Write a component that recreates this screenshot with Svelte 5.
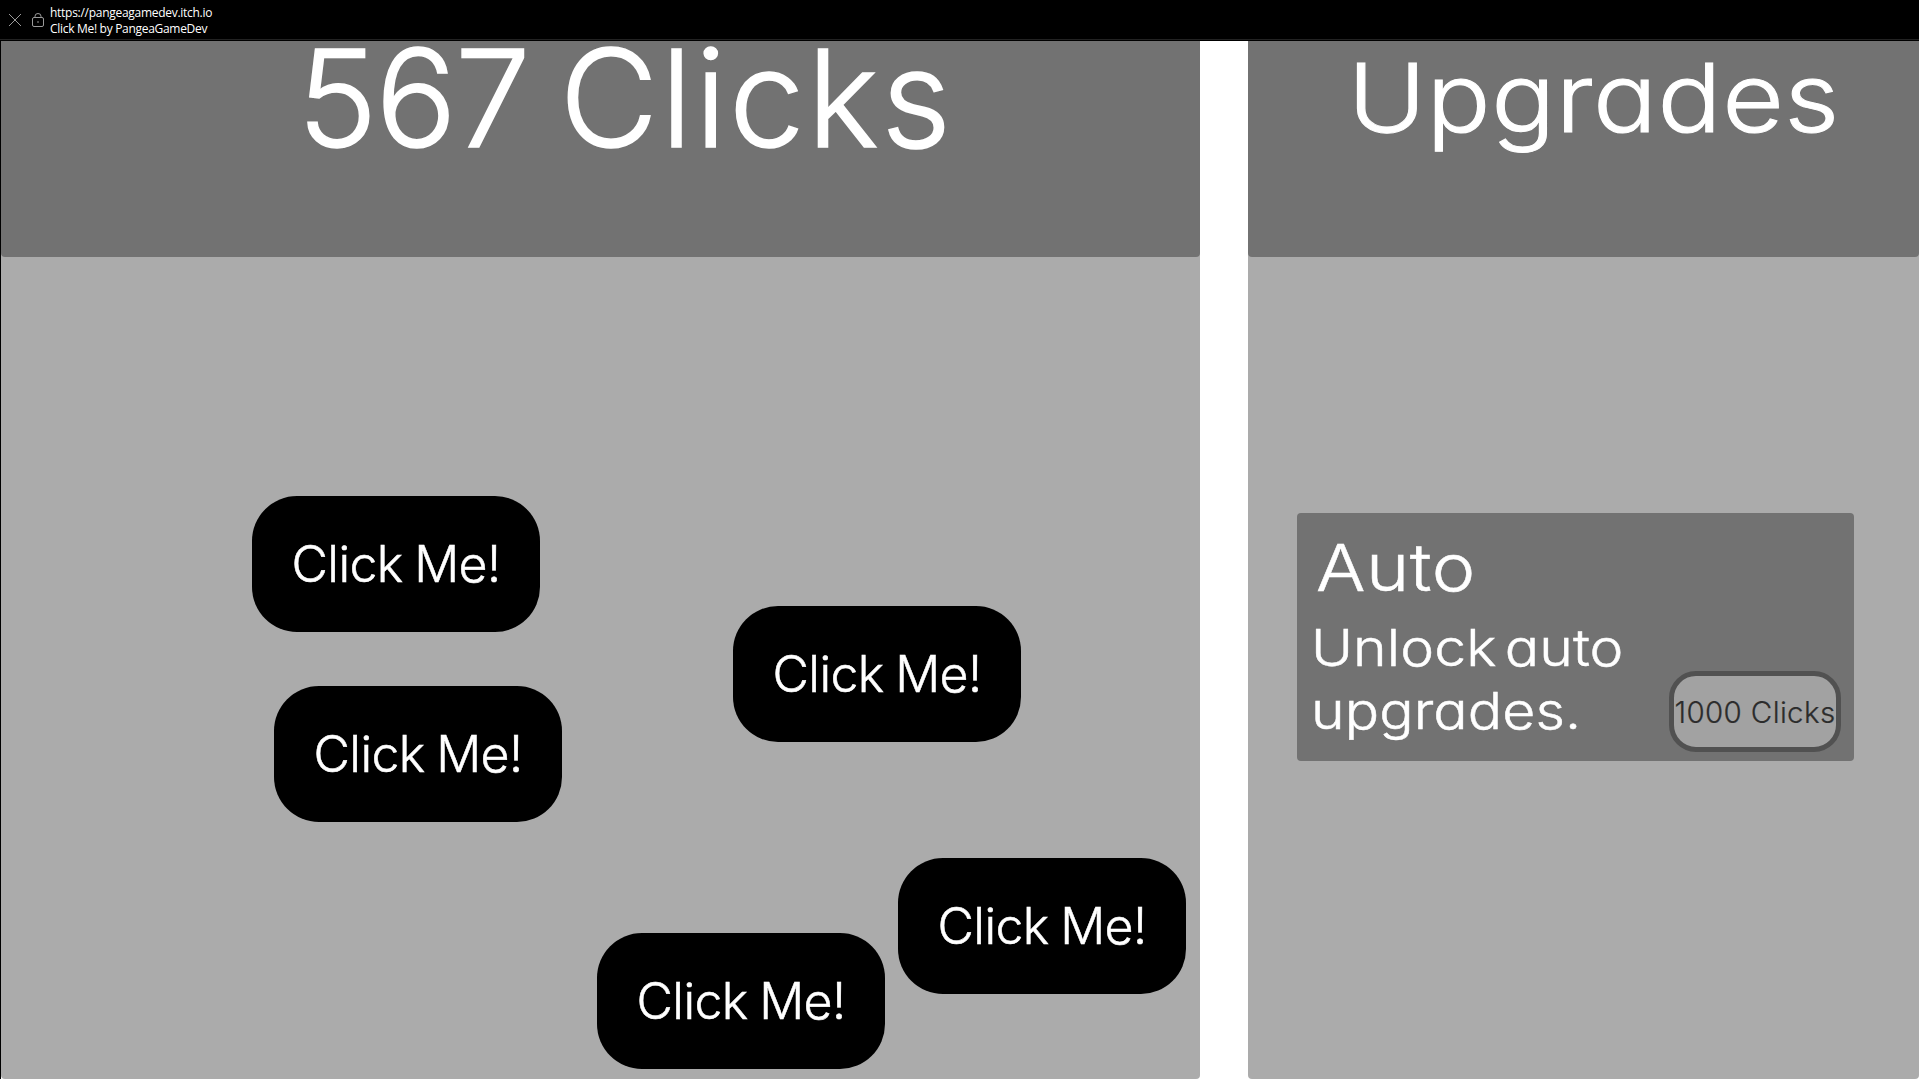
<script lang="ts">
	interface Target {
		x: number;
		y: number;
	}

	interface Upgrade {
		name: string;
		description: string;
		cost: number;
	}

	const page = {
		url: 'https://pangeagamedev.itch.io',
		title: 'Click Me! by PangeaGameDev'
	};

	// positions inside the play field
	const targets: Target[] = [
		{ x: 251, y: 455 },
		{ x: 732, y: 565 },
		{ x: 273, y: 645 },
		{ x: 897, y: 817 },
		{ x: 596, y: 892 }
	];

	let clicks = $state(567);
	let upgrades: Upgrade[] = $state([
		{ name: 'Auto', description: 'Unlock auto upgrades.', cost: 1000 }
	]);

	const buy = (upgrade: Upgrade) => {
		if (clicks < upgrade.cost) return;
		clicks -= upgrade.cost;
		upgrades = upgrades.filter((u) => u.name !== upgrade.name);
	};
</script>

<div class="window">
	<header class="titlebar">
		<svg class="close" viewBox="0 0 14 14" width="14" height="14">
			<path d="M1 1l12 12M13 1L1 13" />
		</svg>
		<svg class="lock" viewBox="0 0 12 14" width="12" height="14">
			<rect x="0.5" y="4.5" width="11" height="9" rx="1.5" />
			<path d="M3 4.5V3.2a3 2.7 0 0 1 6 0v1.3" />
			<rect class="dot" x="5.3" y="8.3" width="1.4" height="1.4" />
		</svg>
		<div class="page">
			<span class="url">{page.url}</span>
			<span class="name">{page.title}</span>
		</div>
	</header>

	<main class="game">
		<section class="panel field">
			<div class="panel-header">
				<h1 class="score"><span class="count">{clicks}</span> <span class="unit">Clicks</span></h1>
			</div>
			{#each targets as target}
				<button
					class="target"
					style="left: {target.x}px; top: {target.y}px"
					onclick={() => clicks++}>Click Me!</button
				>
			{/each}
		</section>

		<section class="panel shop">
			<div class="panel-header">
				<h2 class="shop-title">Upgrades</h2>
			</div>
			{#each upgrades as upgrade (upgrade.name)}
				<article class="card">
					<div class="info">
						<h3>{upgrade.name}</h3>
						<p>{upgrade.description}</p>
					</div>
					<button class="buy" disabled={clicks < upgrade.cost} onclick={() => buy(upgrade)}
						>{upgrade.cost} Clicks</button
					>
				</article>
			{/each}
		</section>
	</main>
</div>

<style>
	:global(body) {
		background: #000;
		overflow: hidden;
	}
	.window,
	.window :where(*) {
		box-sizing: border-box;
		margin: 0;
	}
	.window {
		display: flex;
		flex-direction: column;
		width: 100vw;
		height: 100vh;
		overflow: hidden;
	}

	.titlebar {
		display: flex;
		flex: none;
		align-items: center;
		height: 41px;
		padding-left: 8px;
		background: #000;
		border-bottom: 1px solid #000;
		box-shadow: inset 0 -1px #222;
	}
	.titlebar svg {
		flex: none;
		fill: none;
		stroke: #9a9a9a;
		stroke-width: 1;
	}
	.titlebar .dot {
		fill: #9a9a9a;
		stroke: none;
	}
	.lock {
		margin-left: 10px;
	}
	.page {
		display: flex;
		flex-direction: column;
		margin-left: 6px;
		padding-top: 2px;
		color: #fff;
		font: 12px/16px 'Open Sans', sans-serif;
		white-space: nowrap;
	}
	.url {
		letter-spacing: -0.28px;
	}
	.name {
		letter-spacing: -0.3px;
	}

	.game {
		display: flex;
		flex: 1;
		gap: 48px;
		padding-left: 1px;
		background: linear-gradient(90deg, #000 1px, #fff 1px);
		font-family: Inter, sans-serif;
		font-feature-settings: 'cv11';
		color: #fff;
	}
	.panel {
		position: relative;
		background: #ababab;
		border-radius: 0 0 4px 4px;
	}
	.panel-header {
		display: flex;
		justify-content: center;
		height: 216px;
		background: #727272;
		border-radius: 0 0 4px 4px;
	}
	.field {
		width: 1199px;
		flex: none;
	}
	.shop {
		flex: 1;
	}
	h1,
	h2,
	h3 {
		font-weight: 300;
		line-height: 1;
		white-space: nowrap;
	}
	.score {
		margin-top: -10px;
		padding-left: 50px;
		font-size: 135px;
		word-spacing: -7px;
		-webkit-text-stroke: 1.5px;
	}
	.count {
		letter-spacing: -1.8px;
	}
	.unit {
		letter-spacing: 2.7px;
	}
	.shop-title {
		margin-top: 9px;
		padding-left: 18px;
		font-size: 95px;
		letter-spacing: 0.5px;
		transform: scaleX(1.12);
		-webkit-text-stroke: 1px;
	}

	button {
		padding: 0;
		border: 0;
		font: inherit;
		font-feature-settings: inherit;
		white-space: nowrap;
		cursor: pointer;
	}
	.target {
		position: absolute;
		width: 288px;
		height: 136px;
		border-radius: 45px;
		background: #000;
		color: #fff;
		font-size: 50px;
		font-weight: 300;
		letter-spacing: -0.6px;
		word-spacing: -2px;
		-webkit-text-stroke: 0.5px;
	}

	.card {
		display: flex;
		justify-content: space-between;
		align-items: flex-end;
		width: 557px;
		height: 248px;
		margin: 256px 0 0 49px;
		padding: 0 13px 9px 15px;
		background: #727272;
		border-radius: 4px;
	}
	.info {
		align-self: flex-start;
		width: 350px;
		padding-top: 22px;
	}
	/* the card lettering runs a little wide */
	.info h3,
	.info p {
		transform: scaleX(1.13);
		transform-origin: left;
		-webkit-text-stroke: 0.5px;
	}
	.info h3 {
		margin-left: 4px;
		font-size: 65px;
		letter-spacing: 0.5px;
	}
	.info p {
		margin: 16px 0 0 -1px;
		width: 330px;
		font-size: 50.5px;
		font-weight: 300;
		line-height: 63px;
		letter-spacing: 0.1px;
		word-spacing: -7px;
	}
	.buy {
		flex: none;
		width: 172px;
		height: 81px;
		border: 5px solid #515151;
		border-radius: 27px;
		background: #a2a2a2;
		color: #2c2c2c;
		font-size: 29.5px;
		font-weight: 300;
		letter-spacing: 0.35px;
		-webkit-text-stroke: 0.2px;
	}
	.buy:disabled {
		cursor: default;
	}
</style>
